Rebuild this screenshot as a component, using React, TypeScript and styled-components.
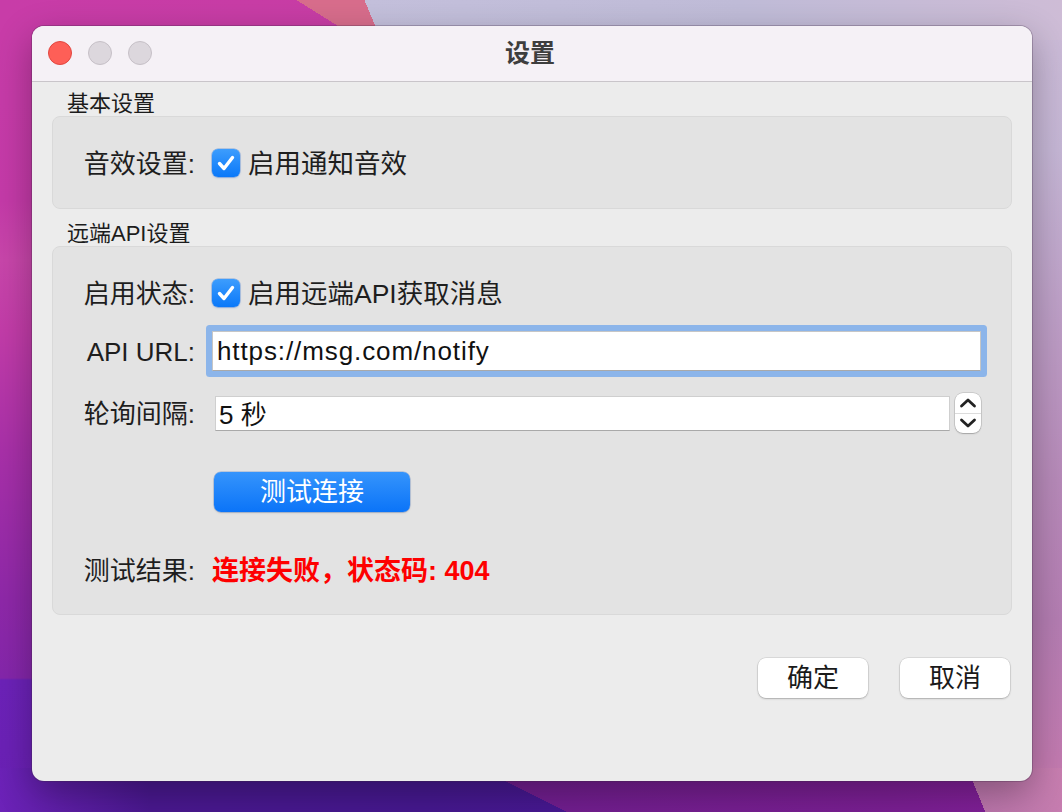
import React from "react";
import styled, { createGlobalStyle } from "styled-components";

// wallpaper: only the strips around the dialog are visible, so paint those
const GlobalStyle = createGlobalStyle`
  html, body {
    margin: 0;
    padding: 0;
    height: 100%;
  }
  body {
    width: 1062px;
    height: 812px;
    overflow: hidden;
    font-family: "Liberation Sans", "Noto Sans CJK SC", sans-serif;
    background-color: #9a3aa8;
    background-repeat: no-repeat;
    background-image:
      linear-gradient(67deg, transparent 351px, #c4c0dc 351px, #c0bcd8 70%, #cebcd6 100%),
      linear-gradient(32deg, transparent 191px, #d86d8c 191px),
      linear-gradient(to right, #c83ca8, #c8409f),
      linear-gradient(67.6deg, transparent 911px, #bc76ac 911px, #c87eb0 100%),
      linear-gradient(26.6deg, transparent 254px, #721e90 254px, #7c1f94 80%, #88209e 100%),
      linear-gradient(to right, #6c22b8 0px, #4a1890 150px, #461890 420px, #4a189a 100%),
      linear-gradient(to bottom, #cdbcd8 0px, #c5b6d5 150px, #bd9ec6 320px, #b78ab9 480px, #b47db2 620px, #c27ab0 760px, #c97cae 812px),
      linear-gradient(to bottom, #c83ca8 0px, #c43aa8 200px, #c846aa 260px, #c23ca8 330px, #a830a8 450px, #8e28a8 600px, #8426aa 678px, #6c22b8 680px, #6a20b4 812px);
    background-size:
      1062px 40px,
      1062px 40px,
      1062px 40px,
      1062px 44px,
      1062px 44px,
      1062px 44px,
      44px 812px,
      44px 812px;
    background-position:
      0 0,
      0 0,
      0 0,
      0 768px,
      0 768px,
      0 768px,
      1018px 0,
      0 0;
  }
`;

const Desktop = styled.div`
  display: flex;
  padding: 26px 0 0 32px;
`;

const Window = styled.div`
  width: 1000px;
  height: 755px;
  border-radius: 12px;
  overflow: hidden;
  background: #ececec;
  box-shadow: 0 0 0 1px rgba(60, 40, 70, 0.28), 0 12px 36px rgba(0, 0, 0, 0.3);
  display: flex;
  flex-direction: column;
`;

const TitleBar = styled.div`
  height: 55px;
  flex-shrink: 0;
  background: #f5f1f6;
  border-bottom: 1px solid #c9c5ca;
  display: grid;
  grid-template-columns: 1fr auto 1fr;
  align-items: center;
  padding: 0 16px;
`;

const Lights = styled.div`
  display: flex;
  gap: 16px;
  padding-bottom: 1px;
`;

const Light = styled.span<{ $color: string; $edge: string }>`
  width: 24px;
  height: 24px;
  border-radius: 50%;
  box-sizing: border-box;
  background: ${(p) => p.$color};
  border: 1px solid ${(p) => p.$edge};
`;

const Title = styled.div`
  font-size: 25px;
  line-height: 1;
  font-weight: 700;
  color: #3e3e3e;
  padding-bottom: 1px;
  margin-left: -4px;
`;

const Body = styled.div`
  padding: 0 20px;
  display: flex;
  flex-direction: column;
`;

const SectionTitle = styled.div<{ $pt: number; $lh: number }>`
  padding-top: ${(p) => p.$pt}px;
  padding-left: 15px;
  font-size: 22px;
  line-height: ${(p) => p.$lh}px;
  color: #1c1c1c;
`;

const GroupBox = styled.div`
  background: #e3e3e3;
  border: 1px solid #d9d9d9;
  border-radius: 8px;
  padding: 25px 30px 24px 29px;
  display: flex;
  flex-direction: column;
`;

const Row = styled.div<{ $h: number; $mt?: number }>`
  display: grid;
  grid-template-columns: 113px 1fr;
  column-gap: 17px;
  align-items: center;
  height: ${(p) => p.$h}px;
  margin-top: ${(p) => p.$mt ?? 0}px;
`;

const Label = styled.div`
  text-align: right;
  font-size: 26px;
  line-height: 1;
  padding-top: 2px;
  color: #1e1e1e;
  white-space: nowrap;
`;

const CheckLine = styled.label`
  display: flex;
  align-items: center;
  gap: 8px;
  font-size: 26.5px;
  color: #1e1e1e;
`;

const CheckText = styled.span`
  line-height: 1;
  padding-top: 2px;
  white-space: nowrap;
`;

const CheckBox = styled.span`
  width: 28px;
  height: 28px;
  border-radius: 6px;
  background: linear-gradient(to bottom, #3d9dfd, #0a78f9);
  box-shadow: 0 0 0 0.5px rgba(0, 80, 200, 0.4), 0 1px 2px rgba(0, 90, 220, 0.25);
  display: flex;
  align-items: center;
  justify-content: center;
`;

const UrlField = styled.div`
  height: 40px;
  box-sizing: border-box;
  background: #fff;
  border: 1px solid #c6c6c6;
  border-bottom-color: #a9a9a9;
  box-shadow: 0 0 0 6px #8cb5ea;
  border-radius: 1px;
  display: flex;
  align-items: center;
  padding: 0 0 0 4px;
  font-size: 26px;
  letter-spacing: 0.9px;
  color: #111;
`;

const SpinWrap = styled.div`
  display: flex;
  align-items: center;
  gap: 5px;
  padding-left: 3px;
`;

const SpinField = styled.div`
  flex: 1;
  height: 35px;
  box-sizing: border-box;
  background: #fff;
  border: 1px solid #cfcfcf;
  border-bottom-color: #a9a9a9;
  display: flex;
  align-items: center;
  padding: 0 0 2px 3px;
  font-size: 26px;
  color: #111;
`;

const Stepper = styled.div`
  width: 26px;
  height: 40px;
  box-sizing: border-box;
  background: #fff;
  border-radius: 8px;
  box-shadow: 0 0 0 0.5px rgba(0, 0, 0, 0.2), 0 1px 1.5px rgba(0, 0, 0, 0.2);
  display: flex;
  flex-direction: column;
`;

const StepHalf = styled.div<{ $top?: boolean }>`
  flex: 1;
  display: flex;
  align-items: center;
  justify-content: center;
  border-bottom: ${(p) => (p.$top ? "1px solid #dcdcdc" : "none")};
`;

const PrimaryButton = styled.button`
  width: 196px;
  height: 40px;
  margin-left: 2px;
  border: none;
  border-radius: 7px;
  background: linear-gradient(to bottom, #3594fc, #0b74f8);
  box-shadow: 0 0 0 0.5px rgba(0, 70, 180, 0.35), 0 1px 2px rgba(0, 0, 0, 0.15);
  color: #fff;
  font-family: inherit;
  font-size: 26px;
  line-height: 1;
  padding: 0 0 1px;
  cursor: pointer;
`;

const ErrorText = styled.div`
  font-size: 27px;
  line-height: 1;
  padding-top: 2px;
  font-weight: 700;
  color: #fe0000;
  white-space: nowrap;
`;

const Footer = styled.div`
  display: flex;
  justify-content: flex-end;
  gap: 32px;
  margin-top: 43px;
  padding-right: 2px;
`;

const DialogButton = styled.button`
  width: 110px;
  height: 40px;
  border: none;
  border-radius: 8px;
  background: #fff;
  box-shadow: 0 0 0 0.5px rgba(0, 0, 0, 0.14), 0 1px 2px rgba(0, 0, 0, 0.22);
  font-family: inherit;
  font-size: 26px;
  line-height: 1;
  color: #1a1a1a;
  padding: 0 0 1px;
  cursor: pointer;
`;

const Check = () => (
  <CheckBox>
    <svg width="28" height="28" viewBox="0 0 28 28">
      <path d="M7.5 14.5 L12 19.5 L20.5 8.5" fill="none" stroke="#fff" strokeWidth="3.4" strokeLinecap="round" strokeLinejoin="round" />
    </svg>
  </CheckBox>
);

const Chevron = ({ up }: { up?: boolean }) => (
  <svg width="18" height="12" viewBox="0 0 18 12">
    <path
      d={up ? "M2.5 9 L9 3 L15.5 9" : "M2.5 3 L9 9 L15.5 3"}
      fill="none"
      stroke="#222"
      strokeWidth="2.8"
      strokeLinecap="round"
      strokeLinejoin="round"
    />
  </svg>
);

export default function App() {
  return (
    <>
      <GlobalStyle />
      <Desktop>
        <Window>
          <TitleBar>
            <Lights>
              <Light $color="#fe5f57" $edge="#e2463f" />
              <Light $color="#dcd7dd" $edge="#c6c0c7" />
              <Light $color="#dcd7dd" $edge="#c6c0c7" />
            </Lights>
            <Title>设置</Title>
            <span />
          </TitleBar>
          <Body>
            <SectionTitle $pt={9} $lh={25}>基本设置</SectionTitle>
            <GroupBox>
              <Row $h={42}>
                <Label>音效设置:</Label>
                <CheckLine>
                  <Check />
                  <CheckText>启用通知音效</CheckText>
                </CheckLine>
              </Row>
            </GroupBox>

            <SectionTitle $pt={13} $lh={24}>远端API设置</SectionTitle>
            <GroupBox>
              <Row $h={42}>
                <Label>启用状态:</Label>
                <CheckLine>
                  <Check />
                  <CheckText>启用远端API获取消息</CheckText>
                </CheckLine>
              </Row>
              <Row $h={54} $mt={10}>
                <Label>API URL:</Label>
                <UrlField>https://msg.com/notify</UrlField>
              </Row>
              <Row $h={40} $mt={15}>
                <Label>轮询间隔:</Label>
                <SpinWrap>
                  <SpinField>5 秒</SpinField>
                  <Stepper>
                    <StepHalf $top>
                      <Chevron up />
                    </StepHalf>
                    <StepHalf>
                      <Chevron />
                    </StepHalf>
                  </Stepper>
                </SpinWrap>
              </Row>
              <Row $h={40} $mt={39}>
                <span />
                <div>
                  <PrimaryButton>测试连接</PrimaryButton>
                </div>
              </Row>
              <Row $h={40} $mt={38}>
                <Label>测试结果:</Label>
                <ErrorText>连接失败，状态码: 404</ErrorText>
              </Row>
            </GroupBox>

            <Footer>
              <DialogButton>确定</DialogButton>
              <DialogButton>取消</DialogButton>
            </Footer>
          </Body>
        </Window>
      </Desktop>
    </>
  );
}
